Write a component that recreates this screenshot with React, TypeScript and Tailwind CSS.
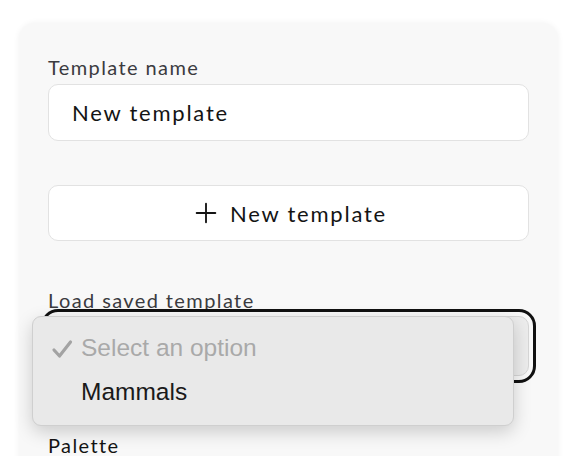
import { Plus } from "lucide-react";

const font = { fontFamily: "Lato, 'Noto Sans', sans-serif" };

export default function App() {
  return (
    <div className="min-h-[456px] bg-white pl-[19px] pr-[20px] pt-[23px] overflow-hidden" style={font}>
      <div className="h-[460px] rounded-2xl bg-[#f8f8f8] shadow-[0_0_6px_rgba(0,0,0,0.06)] px-[29px] pt-[33px]">
        {/* Template name */}
        <label className="block text-[20px] leading-[22px] tracking-[0.07em] text-[#3b3b3f]">Template name</label>
        <input
          type="text"
          defaultValue="New template"
          className="mt-[6px] w-full h-[57px] rounded-[10px] border border-[#e2e2e2] bg-white px-[23px] text-[22px] tracking-[0.08em] text-[#141414] outline-none"
          style={font}
        />

        {/* New template */}
        <button
          className="mt-[44px] w-full h-[56px] flex items-center justify-center gap-[8px] rounded-[10px] border border-[#e2e2e2] bg-white text-[22px] tracking-[0.08em] text-[#141414]"
          style={font}
        >
          <Plus size={32} strokeWidth={1.4} />
          New template
        </button>

        {/* Load saved template */}
        <label className="block mt-[48px] text-[20px] leading-[22px] tracking-[0.07em] text-[#3b3b3f]">Load saved template</label>
        <div className="relative mt-[5px]">
          <div className="h-[60px] rounded-[10px] border border-[#d6d6d6] bg-[#ececec] outline-[3px] outline-solid outline-[#111] outline-offset-[4px]" />

          {/* native-like dropdown */}
          <div
            className="absolute left-[-16px] top-0 w-[482px] rounded-[9px] border border-[#cfcfcf] bg-[#e9e9e9] pt-[9px] pb-[11px] shadow-[0_6px_18px_rgba(0,0,0,0.18)]"
            style={{ fontFamily: "'Liberation Sans', Arial, sans-serif" }}
          >
            <div className="relative h-[44px] flex items-center pl-[48px] text-[24.5px] text-[#a9a9a9]">
              <svg width="22" height="20" viewBox="0 0 22 20" className="absolute left-[18px] top-[13px]">
                <path d="M3 11 L8.5 17 L19.5 3" fill="none" stroke="#a3a3a3" strokeWidth="3.2" strokeLinecap="round" strokeLinejoin="round" />
              </svg>
              Select an option
            </div>
            <div className="h-[44px] flex items-center pl-[48px] text-[24.5px] text-[#1a1a1a]">Mammals</div>
          </div>
        </div>

        <label className="block mt-[58px] text-[20px] leading-[22px] tracking-[0.07em] text-[#141414]">Palette</label>
      </div>
    </div>
  );
}
